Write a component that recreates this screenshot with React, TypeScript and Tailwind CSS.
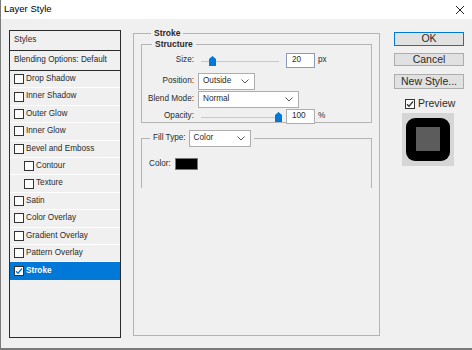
import React from "react";

const font = { fontFamily: '"Liberation Sans", Arial, sans-serif' };

function Check({ checked, blue }: { checked?: boolean; blue?: boolean }) {
  return (
    <span className="flex h-[10px] w-[10px] shrink-0 items-center justify-center border border-[#333] bg-white">
      {checked && (
        <svg width="8" height="8" viewBox="0 0 8 8">
          <path d="M1 4.2 L3 6.2 L7 1.5" fill="none" stroke={blue ? "#0078d7" : "#333"} strokeWidth="1.3" />
        </svg>
      )}
    </span>
  );
}

function Chevron() {
  return (
    <svg width="8" height="5" viewBox="0 0 8 5" className="shrink-0">
      <path d="M0.5 0.5 L4 4 L7.5 0.5" fill="none" stroke="#555" strokeWidth="1" />
    </svg>
  );
}

function Select({ value, w }: { value: string; w: string }) {
  return (
    <div className={`flex h-[17px] items-center justify-between border border-[#adadad] bg-white pl-[4px] pr-[5px] ${w}`}>
      <span>{value}</span>
      <Chevron />
    </div>
  );
}

function Thumb() {
  return (
    <svg width="7" height="10" viewBox="0 0 7 10">
      <path d="M0 3 L3.5 0 L7 3 L7 10 L0 10 Z" fill="#0078d7" />
    </svg>
  );
}

function Slider({ pos }: { pos: number }) {
  return (
    <div className="relative h-[12px] w-[84px]">
      <div className="absolute left-[3px] right-[3px] top-[6px] h-px bg-[#c8c8c8]" />
      <div className="absolute top-[1px]" style={{ left: pos }}>
        <Thumb />
      </div>
    </div>
  );
}

const items: { label: string; indent?: boolean }[] = [
  { label: "Drop Shadow" },
  { label: "Inner Shadow" },
  { label: "Outer Glow" },
  { label: "Inner Glow" },
  { label: "Bevel and Emboss" },
  { label: "Contour", indent: true },
  { label: "Texture", indent: true },
  { label: "Satin" },
  { label: "Color Overlay" },
  { label: "Gradient Overlay" },
  { label: "Pattern Overlay" },
];

export default function App() {
  return (
    <div
      className="flex h-[350px] w-[472px] flex-col overflow-hidden border-b-2 border-l border-[#7a7a7a] bg-[#f0f0f0] text-[8.2px] text-[#2a2a2a]"
      style={font}
    >
      <div className="flex h-[19px] shrink-0 items-center justify-between bg-white pl-[3px] pr-[7px] text-[9.5px] text-black">
        <span>Layer Style</span>
        <svg width="10" height="10" viewBox="0 0 10 10">
          <path d="M1 1 L9 9 M9 1 L1 9" stroke="#222" strokeWidth="1" />
        </svg>
      </div>

      <div className="flex flex-1">
        {/* styles list */}
        <div className="ml-[8px] mt-[11px] flex h-[308px] w-[112px] flex-col border border-[#2b2b2b]">
          <div className="flex h-[20px] items-center border-b border-[#2b2b2b] pl-[4px]">Styles</div>
          <div className="flex h-[20px] items-center border-b border-[#2b2b2b] pl-[4px]">Blending Options: Default</div>
          {items.map((it) => (
            <div
              key={it.label}
              className={`flex h-[17.4px] items-center gap-[2px] border-b border-white ${it.indent ? "pl-[14px]" : "pl-[4px]"}`}
            >
              <Check />
              <span>{it.label}</span>
            </div>
          ))}
          <div className="flex h-[17.4px] items-center gap-[2px] bg-[#0078d7] pl-[4px] font-bold text-white">
            <Check checked blue />
            <span>Stroke</span>
          </div>
        </div>

        {/* stroke panel */}
        <fieldset className="ml-[12px] mt-[9px] flex h-[308px] w-[247px] flex-col border border-[#b4b4b4] px-[7px] pb-0">
          <legend className="ml-[10px] px-[3px] text-[8.5px] leading-[11px] font-bold">Stroke</legend>

          <fieldset className="flex h-[84px] flex-col border border-[#b4b4b4] pr-0">
            <legend className="ml-[10px] px-[3px] text-[8.5px] leading-[11px] font-bold">Structure</legend>

            <div className="mt-[3px] flex h-[15px] items-center">
              <span className="w-[52px] text-right">Size:</span>
              <div className="ml-[4px]">
                <Slider pos={11} />
              </div>
              <div className="ml-[4px] flex h-[15px] w-[29px] items-center border border-[#8a9ab8] bg-white pl-[5px]">20</div>
              <span className="ml-[3px]">px</span>
            </div>

            <div className="mt-[5px] flex items-center">
              <span className="w-[52px] text-right">Position:</span>
              <div className="ml-[4px]">
                <Select value="Outside" w="w-[57px]" />
              </div>
            </div>

            <div className="mt-[1px] flex items-center">
              <span className="w-[52px] text-right">Blend Mode:</span>
              <div className="ml-[4px]">
                <Select value="Normal" w="w-[101px]" />
              </div>
            </div>

            <div className="mt-[1px] flex h-[15px] items-center">
              <span className="w-[52px] text-right">Opacity:</span>
              <div className="ml-[4px]">
                <Slider pos={77} />
              </div>
              <div className="ml-[4px] flex h-[15px] w-[29px] items-center border border-[#adadad] bg-white pl-[5px]">100</div>
              <span className="ml-[3px]">%</span>
            </div>
          </fieldset>

          <fieldset className="mt-[7px] flex h-[58px] flex-col border border-b-0 border-[#b4b4b4]">
            <legend className="ml-[8px] flex items-center gap-[3px] px-[3px]">
              <span>Fill Type:</span>
              <Select value="Color" w="w-[62px]" />
            </legend>
            <div className="mt-[11px] flex items-center gap-[4px] pl-[7px]">
              <span>Color:</span>
              <span className="h-[12px] w-[23px] border border-[#777] bg-black" />
            </div>
          </fieldset>
        </fieldset>

        {/* buttons */}
        <div className="ml-[14px] mt-[13px] flex w-[70px] flex-col items-center text-[10.5px]">
          <div className="flex h-[14px] w-[70px] items-center justify-center border border-[#0078d7] bg-[#e1e1e1]">OK</div>
          <div className="mt-[7px] flex h-[13px] w-[70px] items-center justify-center border border-[#adadad] bg-[#e1e1e1]">Cancel</div>
          <div className="mt-[8px] flex h-[15px] w-[70px] items-center justify-center border border-[#adadad] bg-[#e1e1e1]">New Style...</div>
          <div className="mt-[7px] flex items-center gap-[3px] self-start pl-[11px]">
            <Check checked />
            <span>Preview</span>
          </div>
          <div className="ml-[8px] mt-[1px] flex h-[53px] w-[52px] items-center justify-center self-start bg-[#d6d6d6]">
            <div className="flex h-[43px] w-[44px] items-center justify-center rounded-[9px] bg-black">
              <div className="h-[24px] w-[24px] bg-[#5c5c5c]" />
            </div>
          </div>
        </div>
      </div>
    </div>
  );
}
